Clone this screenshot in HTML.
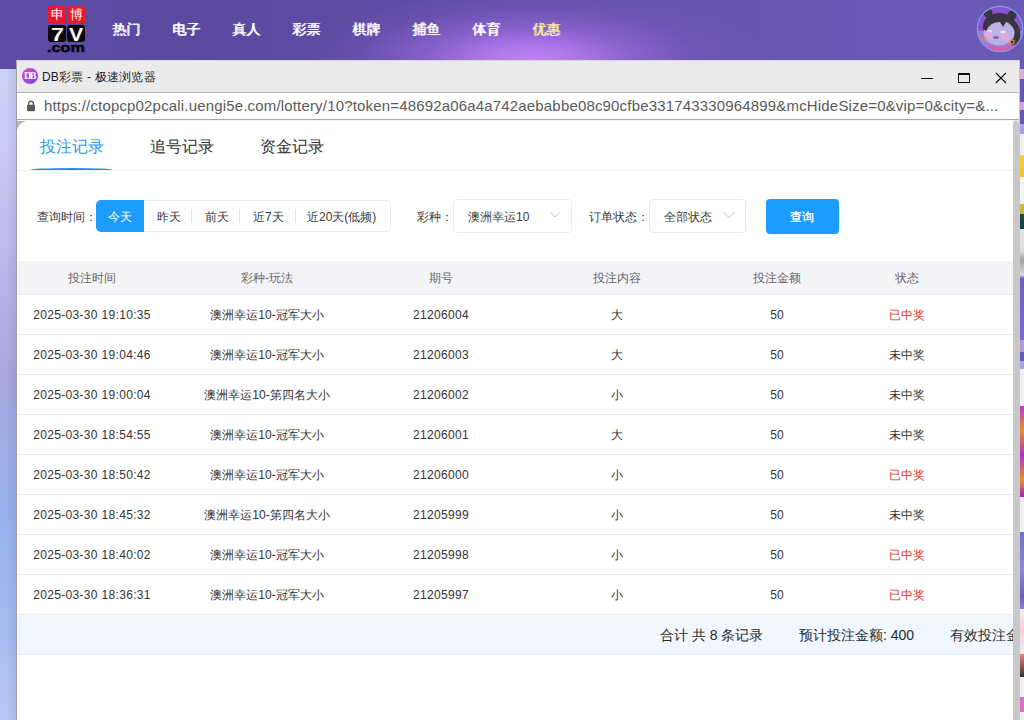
<!DOCTYPE html>
<html><head><meta charset="utf-8">
<style>
*{margin:0;padding:0;box-sizing:border-box}
html,body{width:1024px;height:720px;overflow:hidden;font-family:"Liberation Sans",sans-serif}
body{position:relative;background:linear-gradient(180deg,#5c4ba2 0px,#5c4ba2 68px,#ccd2f8 69px,#c8cbf4 150px,#b8b6e8 280px,#a8a8de 380px,#a0aee6 440px,#98b2ec 520px,#a4bcf0 620px,#b8c8f4 720px)}
.abs{position:absolute}
#hdr{left:0;top:0;width:1024px;height:69px;overflow:hidden;background:linear-gradient(90deg,#5f4ca8 0%,#5a4a9f 15%,#5c4ba2 35%,#6453aa 60%,#6857b2 80%,#6a5ab6 100%)}
#hdr .glow{left:250px;top:-25px;width:560px;height:170px;background:radial-gradient(ellipse 50% 50% at 50% 50%,rgba(190,130,248,1) 0%,rgba(180,122,240,.95) 15%,rgba(155,105,220,.65) 38%,rgba(125,90,195,.3) 62%,rgba(100,80,170,0) 85%)}
.nav{top:21px;font-size:14px;color:#fff;font-weight:400;text-shadow:0.5px 0 0 currentColor;white-space:nowrap}
.logo{width:18px;border-radius:3px;text-align:center;color:#fff}
#win{left:16px;top:60px;width:1004px;height:660px;background:#ebebeb;border-left:1px solid #a0a0a0;border-top:1px solid #d4d4d4;border-right:1px solid #c8c8c8}
#title{left:42px;top:69px;font-size:12px;letter-spacing:0.2px;color:#1e1e1e;white-space:nowrap}
#addr{left:17px;top:92px;width:1002px;height:28px;background:#fff;border-top:1px solid #b4b4b4;border-bottom:1px solid #a4a4a4}
#url{left:44px;top:97px;font-size:15px;color:#5a5a5a;white-space:nowrap;letter-spacing:0.17px}
#content{left:17px;top:120px;width:996px;height:600px;background:linear-gradient(90deg,#b0b2b8 0px,#b8bac0 8px,#f4f4f4 16px);border-top:1px solid #f4f4f4}
#page{left:17px;top:121px;width:996px;height:599px;background:#fff;border-top-left-radius:11px;overflow:hidden}
.tab{top:137px;font-size:16px;color:#333;white-space:nowrap}
.t12{font-size:12px;color:#3a3a3a;white-space:nowrap}
#tbl{left:0;top:140px;width:996px;height:400px}
.thead{position:absolute;left:0;top:0;width:996px;height:34px;background:#f4f4f6;border-bottom:1px solid #e6eaf2}
.row{position:absolute;left:0;width:996px;height:40px;border-bottom:1px solid #ebebeb;background:#fff}
.c{position:absolute;top:0;line-height:40px;font-size:12px;color:#333;white-space:nowrap;transform:translateX(-50%)}
.c.h{line-height:34px;color:#666}
.c.d{letter-spacing:0.33px}
.red{color:#e2332a}
.sum{position:absolute;left:0;top:354px;width:996px;height:40px;background:#f0f7fe;border-bottom:1px solid #e8eef6}
.sum span{position:absolute;top:0;line-height:40px;font-size:14px;color:#2a2a2a;white-space:nowrap}
.sep{width:1px;height:14px;background:#e3e3e3;top:209px}
</style></head><body>
<div id="hdr" class="abs"><div class="glow abs"></div></div>
<!-- logo -->
<div class="abs logo" style="left:48px;top:6px;height:18px;background:#e8192c;font-size:13px;line-height:18px">申</div>
<div class="abs logo" style="left:67px;top:6px;height:18px;background:#e8192c;font-size:13px;line-height:18px">博</div>
<div class="abs logo" style="left:48px;top:25px;height:17px;background:#0a0a0a"></div>
<div class="abs logo" style="left:67px;top:25px;height:17px;background:#0a0a0a"></div>
<div class="abs" style="left:50.5px;top:26px;width:13px;font-size:18px;font-weight:bold;line-height:18px;color:#f4f4f4;transform:scaleX(1.3);transform-origin:0 0">7</div>
<div class="abs" style="left:68.5px;top:26px;width:13px;font-size:18px;font-weight:bold;line-height:18px;color:#f4f4f4;transform:scaleX(1.18);transform-origin:0 0">V</div>
<div class="abs" style="left:47px;top:41.5px;font-size:12px;font-weight:bold;color:#000;line-height:12px;transform:scaleX(1.35);transform-origin:0 0;-webkit-text-stroke:0.4px #000">.com</div>

<div class="abs nav" style="left:112px">热门</div>
<div class="abs nav" style="left:172px">电子</div>
<div class="abs nav" style="left:232px">真人</div>
<div class="abs nav" style="left:292px">彩票</div>
<div class="abs nav" style="left:352px">棋牌</div>
<div class="abs nav" style="left:412px">捕鱼</div>
<div class="abs nav" style="left:472px">体育</div>
<div class="abs nav" style="left:532px;color:#f8ec96">优惠</div>

<svg class="abs" style="left:976px;top:5px" width="48" height="48" viewBox="0 0 48 48">
<defs><clipPath id="cc"><circle cx="24" cy="24" r="22.5"/></clipPath></defs>
<g clip-path="url(#cc)">
<rect width="48" height="48" fill="#8a52cc"/>
<rect y="26" width="48" height="22" fill="#a07ad6"/>
<path d="M34 14 Q46 18 44 34 Q42 42 36 42 L32 24Z" fill="#3c3642"/>
<ellipse cx="23" cy="28" rx="15.5" ry="12.5" fill="#bab2e2"/>
<path d="M7 24 Q6 10 22 8 Q38 8 41 22 L38 24 Q36 18 30 17 L27 22 L24 17 Q14 17 10 26Z" fill="#3a3440"/>
<circle cx="12" cy="8" r="4.5" fill="#3a3440"/>
<circle cx="36" cy="10" r="4.5" fill="#3a3440"/>
<ellipse cx="13.5" cy="26.5" rx="2.8" ry="1.6" fill="#f2eaf2"/>
<ellipse cx="27" cy="27" rx="2.8" ry="1.6" fill="#f2eaf2"/>
<circle cx="12" cy="29.5" r="3.5" fill="#e2a8e2"/>
<circle cx="29" cy="32" r="4" fill="#e2a8e2"/>
<ellipse cx="20" cy="32.5" rx="3" ry="1.3" fill="#9a4aa8"/>
<circle cx="7" cy="33" r="2" fill="none" stroke="#e08a30" stroke-width="1.2"/>
<circle cx="36" cy="37" r="2.2" fill="none" stroke="#e08a30" stroke-width="1.2"/>
<path d="M4 48 L9 40 Q24 45 42 39 L46 48Z" fill="#e25aa0"/>
</g>
<circle cx="24" cy="24" r="22.7" fill="none" stroke="#7c9ef6" stroke-width="1.2"/>
</svg>

<div class="abs" style="left:0;top:69px;width:16px;height:651px;background:linear-gradient(90deg,rgba(70,70,150,0) 40%,rgba(70,70,150,.12) 100%)"></div>
<div id="win" class="abs"></div>
<div class="abs" style="left:22px;top:68px;width:16px;height:16px;border-radius:50%;background:linear-gradient(135deg,#e04cd0,#9848e0 60%,#6a50e8);color:#fff;font-size:10px;line-height:16px;text-align:center;font-family:'Liberation Serif',serif;font-weight:bold;letter-spacing:-1.5px;padding-right:1px">DB</div>
<div id="title" class="abs">DB彩票 - 极速浏览器</div>
<!-- window controls -->
<div class="abs" style="left:921px;top:78px;width:12px;height:1px;background:#111"></div>
<div class="abs" style="left:958px;top:73px;width:12px;height:10px;border:1px solid #111;border-top-width:2px"></div>
<svg class="abs" style="left:995px;top:72px" width="12" height="12" viewBox="0 0 12 12"><path d="M0.8 0.8 L11 11 M11 0.8 L0.8 11" stroke="#111" stroke-width="1.2"/></svg>

<div id="addr" class="abs"></div>
<svg class="abs" style="left:26px;top:99.5px" width="10" height="12" viewBox="0 0 10 12"><path d="M2.6 5 V3.6 A2.4 2.4 0 0 1 7.4 3.6 V5" fill="none" stroke="#5a5a5a" stroke-width="1.4"/><rect x="1" y="4.8" width="8" height="6.4" rx="0.8" fill="#5a5a5a"/></svg>
<div id="url" class="abs">https://ctopcp02pcali.uengi5e.com/lottery/10?token=48692a06a4a742aebabbe08c90cfbe331743330964899&amp;mcHideSize=0&amp;vip=0&amp;city=&amp;...</div>
<div id="content" class="abs"></div>
<div id="page" class="abs">
<div class="abs tab" style="left:23px;top:16px;color:#2a9af0">投注记录</div>
<div class="abs tab" style="left:133px;top:16px">追号记录</div>
<div class="abs tab" style="left:243px;top:16px">资金记录</div>
<div class="abs" style="left:13px;top:47px;width:83px;height:2px;background:#1890ff;border-radius:50% 50% 0 0/100% 100% 0 0"></div>
<div class="abs" style="left:0;top:49px;width:996px;height:1px;background:#f0f0f0"></div>

<div class="abs t12" style="left:20px;top:88px">查询时间：</div>
<div class="abs" style="left:79px;top:79px;width:295px;height:32px;border:1px solid #ebebeb;border-radius:5px"></div>
<div class="abs" style="left:79px;top:79px;width:48px;height:32px;background:#1e9bff;border-radius:5px 0 0 5px"></div>
<div class="abs t12" style="left:91px;top:88px;color:#fff">今天</div>
<div class="abs t12" style="left:140px;top:88px">昨天</div>
<div class="abs sep" style="left:174px;top:88px"></div>
<div class="abs t12" style="left:188px;top:88px">前天</div>
<div class="abs sep" style="left:222px;top:88px"></div>
<div class="abs t12" style="left:236px;top:88px">近7天</div>
<div class="abs sep" style="left:278px;top:88px"></div>
<div class="abs t12" style="left:290px;top:88px">近20天(低频)</div>

<div class="abs t12" style="left:400px;top:88px">彩种：</div>
<div class="abs" style="left:436px;top:78px;width:119px;height:34px;border:1px solid #ebebeb;border-radius:4px"></div>
<div class="abs t12" style="left:451px;top:88px">澳洲幸运10</div>
<svg class="abs" style="left:533px;top:91px" width="10" height="6" viewBox="0 0 10 6"><path d="M0.5 0.5 L5 5 L9.5 0.5" fill="none" stroke="#c0c4cc" stroke-width="1"/></svg>
<div class="abs t12" style="left:572px;top:88px">订单状态：</div>
<div class="abs" style="left:632px;top:78px;width:97px;height:34px;border:1px solid #ebebeb;border-radius:4px"></div>
<div class="abs t12" style="left:647px;top:88px">全部状态</div>
<svg class="abs" style="left:706px;top:91px" width="12" height="6" viewBox="0 0 12 6"><path d="M0.5 0.5 L6 5.5 L11.5 0.5" fill="none" stroke="#c0c4cc" stroke-width="1"/></svg>
<div class="abs" style="left:749px;top:78px;width:73px;height:35px;background:#1e9bff;border-radius:4px;color:#fff;font-size:12px;line-height:36px;text-align:center;text-indent:-1px;text-shadow:0.4px 0 0 #fff">查询</div>

<div id="tbl" class="abs">
<div class="thead"><span class="c h" style="left:75px">投注时间</span><span class="c h" style="left:250px">彩种-玩法</span><span class="c h" style="left:424px">期号</span><span class="c h" style="left:600px">投注内容</span><span class="c h" style="left:760px">投注金额</span><span class="c h" style="left:890px">状态</span></div>
<div class="row" style="top:34px"><span class="c d" style="left:75px">2025-03-30 19:10:35</span><span class="c" style="left:250px">澳洲幸运10-冠军大小</span><span class="c d" style="left:424px">21206004</span><span class="c" style="left:600px">大</span><span class="c" style="left:760px">50</span><span class="c red" style="left:890px">已中奖</span></div>
<div class="row" style="top:74px"><span class="c d" style="left:75px">2025-03-30 19:04:46</span><span class="c" style="left:250px">澳洲幸运10-冠军大小</span><span class="c d" style="left:424px">21206003</span><span class="c" style="left:600px">大</span><span class="c" style="left:760px">50</span><span class="c" style="left:890px">未中奖</span></div>
<div class="row" style="top:114px"><span class="c d" style="left:75px">2025-03-30 19:00:04</span><span class="c" style="left:250px">澳洲幸运10-第四名大小</span><span class="c d" style="left:424px">21206002</span><span class="c" style="left:600px">小</span><span class="c" style="left:760px">50</span><span class="c" style="left:890px">未中奖</span></div>
<div class="row" style="top:154px"><span class="c d" style="left:75px">2025-03-30 18:54:55</span><span class="c" style="left:250px">澳洲幸运10-冠军大小</span><span class="c d" style="left:424px">21206001</span><span class="c" style="left:600px">大</span><span class="c" style="left:760px">50</span><span class="c" style="left:890px">未中奖</span></div>
<div class="row" style="top:194px"><span class="c d" style="left:75px">2025-03-30 18:50:42</span><span class="c" style="left:250px">澳洲幸运10-冠军大小</span><span class="c d" style="left:424px">21206000</span><span class="c" style="left:600px">小</span><span class="c" style="left:760px">50</span><span class="c red" style="left:890px">已中奖</span></div>
<div class="row" style="top:234px"><span class="c d" style="left:75px">2025-03-30 18:45:32</span><span class="c" style="left:250px">澳洲幸运10-第四名大小</span><span class="c d" style="left:424px">21205999</span><span class="c" style="left:600px">小</span><span class="c" style="left:760px">50</span><span class="c" style="left:890px">未中奖</span></div>
<div class="row" style="top:274px"><span class="c d" style="left:75px">2025-03-30 18:40:02</span><span class="c" style="left:250px">澳洲幸运10-冠军大小</span><span class="c d" style="left:424px">21205998</span><span class="c" style="left:600px">小</span><span class="c" style="left:760px">50</span><span class="c red" style="left:890px">已中奖</span></div>
<div class="row" style="top:314px"><span class="c d" style="left:75px">2025-03-30 18:36:31</span><span class="c" style="left:250px">澳洲幸运10-冠军大小</span><span class="c d" style="left:424px">21205997</span><span class="c" style="left:600px">小</span><span class="c" style="left:760px">50</span><span class="c red" style="left:890px">已中奖</span></div>
<div class="sum"><span style="left:643px">合计 共 8 条记录</span><span style="left:782px">预计投注金额: 400</span><span style="left:933px">有效投注金额: 400</span></div>
</div>
</div>
<!-- scrollbar -->
<div class="abs" style="left:1013px;top:121px;width:6px;height:599px;background:#c8c8c8;border-radius:3px 3px 0 0"></div>
<!-- right strip -->
<div class="abs" style="left:1020px;top:60px;width:4px;height:660px;background:linear-gradient(180deg,#6a5ab8 0px,#6a5ab8 9px,#d8b0d0 9px,#d8b0d0 19px,#6656b8 19px,#6656b8 42px,#d0a8cc 42px,#d0a8cc 50px,#6656b8 50px,#6656b8 64px,#a8a0e0 64px,#a8a0e0 74px,#f0f0f0 74px,#f0f0f0 95px,#f0d040 95px,#f0c030 117px,#f4f4f4 117px,#f4f4f4 144px,#c8b840 144px,#c8b840 154px,#204850 154px,#1c3a44 169px,#e0e0e0 169px,#e0e0e0 190px,#a0a0a0 200px,#d8d8d8 215px,#7060c0 218px,#7a6cc8 280px,#b0a0d0 280px,#b0a0d0 292px,#6a5ab8 292px,#6a5ab8 301px,#a8a8e0 301px,#a8a8e0 309px,#f0f0f0 309px,#f0f0f0 346px,#b838d0 346px,#e89030 370px,#b030c8 395px,#e89030 420px,#a020c0 437px,#f0f0f0 437px,#f0f0f0 472px,#7070c8 472px,#8888d0 510px,#6a60c0 537px,#9080d0 549px,#f0f0f0 549px,#f4d0d0 570px,#f0f0f0 594px,#f08080 594px,#303030 617px,#f0f0f0 617px,#f0f0f0 637px,#e070c0 637px,#e070c0 652px,#f0f0f0 652px)"></div>
</body></html>
